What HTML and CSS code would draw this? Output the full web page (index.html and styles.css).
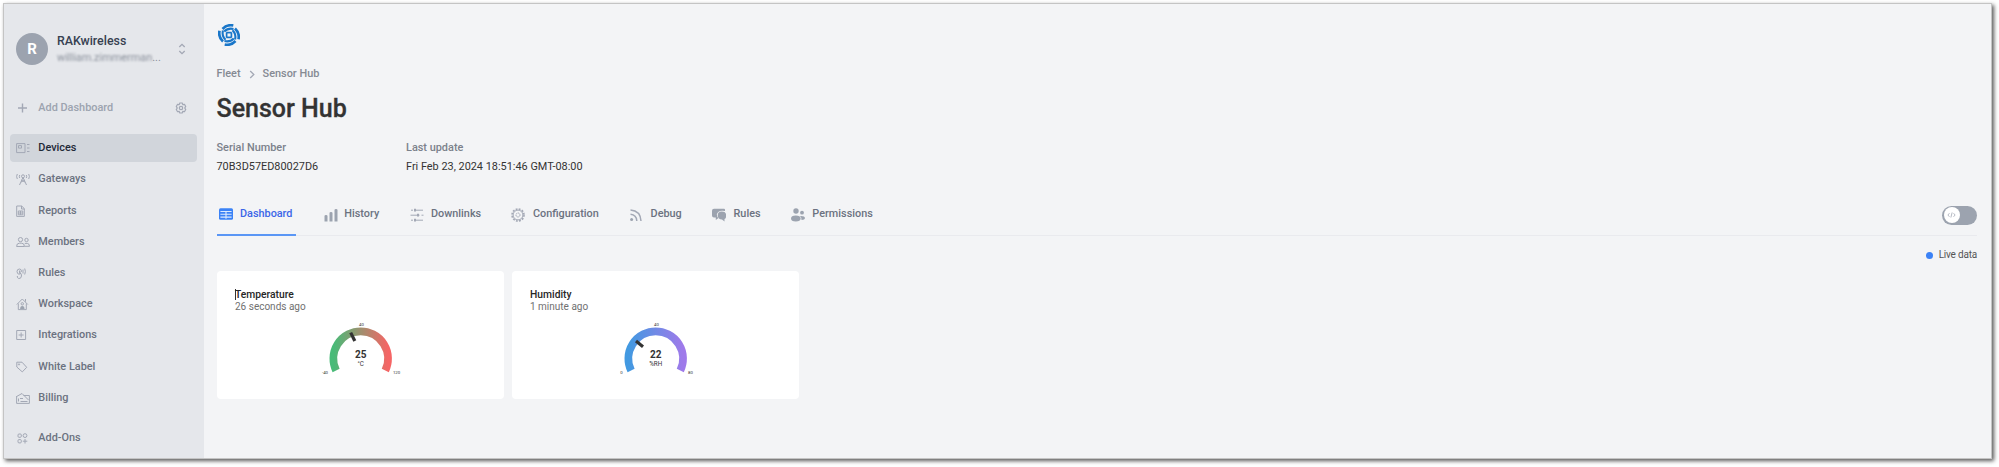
FILE: index.html
```html
<!DOCTYPE html>
<html lang="en">
<head>
<meta charset="utf-8">
<title>Sensor Hub</title>
<link rel="stylesheet" href="styles.css">
</head>
<body>
<div class="window">
  <aside class="sidebar">
    <div class="account">
      <div class="avatar">R</div>
      <div class="who"><div class="name">RAKwireless</div><div class="mail"><span class="blurred">william.zimmerman</span>...</div></div>
      <svg class="updown" viewBox="0 0 8 12"><path d="M1.3 4 4 1.3 6.7 4M1.3 8 4 10.7 6.7 8"/></svg>
    </div>
    <div class="add">
      <svg class="ico" viewBox="0 0 14 14"><path d="M2 7h9M6.5 2.5v9"/></svg>
      <span>Add Dashboard</span>
      <svg class="cog" viewBox="0 0 12 12"><path d="M4.800 1h2.400l.6 1.500 1.700-.2 1.200 2.100L9.800 6l.9 1.600-1.200 2.100-1.700-.2-.6 1.500H4.800l-.6-1.500-1.700.2-1.200-2.100L2.200 6l-.9-1.600 1.200-2.100 1.700.2z"/><circle cx="6" cy="6" r="1.700"/></svg>
    </div>
    <nav class="nav">
      <a class="item active"><svg class="ico" viewBox="0 0 14 14"><path d="M.6 2.600h8.400v9H.600zM2.500 4.600h3v2.500h-3zM11 3.500h2.500M11 7h2.500M11 10.500h2.500"/></svg>Devices</a>
      <a class="item"><svg class="ico" viewBox="0 0 14 14"><path d="M7 5.500 3.500 13M7 5.500l3.500 7.500M5 10l4-2M9 10 5 8M1.300 2q-1.400 2.500 0 5M12.700 2q1.400 2.500 0 5M3.700 3q-.8 1.500 0 3M10.300 3q.8 1.500 0 3"/><circle cx="7" cy="4.300" r="1.500"/></svg>Gateways</a>
      <a class="item"><svg class="ico" viewBox="0 0 14 14"><path d="M.7 2h5L8.300 4.600V12.400H.700zM5.500 2v3h3M2.300 7h4.500v3.800H2.300zM2.300 9h4.500M4.500 7v3.800"/></svg>Reports</a>
      <a class="item"><svg class="ico" viewBox="0 0 14 14"><circle cx="4.500" cy="4.600" r="2.100"/><circle cx="10.500" cy="5" r="1.700"/><path d="M.6 11.500q0-3.300 2.700-3.300h2.500q2.600 0 2.600 3.300zM8.800 8.400h2.500q2.200.2 2.200 2.900H8.500"/></svg>Members</a>
      <a class="item"><svg class="ico" viewBox="0 0 14 14"><path d="M3.500 8.500Q1 8 1 5.500T3.500 3Q5.500 3 5.500 5.500L3 7q3 0 2.500 3T2.700 12.500Q1 12 1.300 10M7 3.500v4M8.700 2.500q1.400 3 0 6M3.500 4.500v2"/></svg>Rules</a>
      <a class="item"><svg class="ico" viewBox="0 0 14 14"><path d="M.8 7.500 6.300 2l5.500 5.500M2.300 6.500v6.100h8V6.500M9.500 2v2.700"/><circle cx="6.300" cy="6.800" r="1.200"/><path class="solid" d="M4.100 12q0-2.900 2.200-2.900T8.500 12z"/></svg>Workspace</a>
      <a class="item"><svg class="ico" viewBox="0 0 14 14"><path d="M.7 2.500h8.900v9H.7zM5.150 4.500v5M2.600 7h5"/></svg>Integrations</a>
      <a class="item"><svg class="ico" viewBox="0 0 14 14"><path d="M.8 2.200H6l4.700 5.100-4.400 4.600L.8 7z"/><circle cx="3" cy="4.400" r=".6"/></svg>White Label</a>
      <a class="item"><svg class="ico" viewBox="0 0 14 14"><path d="M.6 5.500 6 2.500l6.500 6.500M7.500 4.500h5.900v7.900H.6V5M2.500 7.500v3M4.500 10.500h7M4 7.500h3"/></svg>Billing</a>
      <a class="item last"><svg class="ico" viewBox="0 0 14 14"><rect x="2" y="3" width="3.300" height="3.300" rx="1"/><circle cx="9" cy="4.600" r="1.900"/><rect x="2" y="8.600" width="3.300" height="3.300" rx="1"/><path d="M9 8v4.500M6.800 10.200h4.500"/></svg>Add-Ons</a>
    </nav>
  </aside>
  <main class="main">
    <svg class="logo" viewBox="0 0 22 22">
      <g id="blade"><path d="M4.500 5Q9 .2 15.300 1.500" stroke-width="2.700"/><path d="M6.200 7.500Q10 3.600 15.500 4.900" stroke-width="2.100"/><path d="M8.300 8.600h5.200" stroke-width="1.700"/></g>
      <use href="#blade" transform="rotate(90 11 11)"/><use href="#blade" transform="rotate(180 11 11)"/><use href="#blade" transform="rotate(270 11 11)"/>
    </svg>
    <div class="crumbs"><span>Fleet</span><svg viewBox="0 0 6 9"><path d="M1.200 1 4.800 4.500 1.200 8"/></svg><span>Sensor Hub</span></div>
    <h1 class="title">Sensor Hub</h1>
    <dl class="meta">
      <div><dt>Serial Number</dt><dd>70B3D57ED80027D6</dd></div>
      <div><dt>Last update</dt><dd>Fri Feb 23, 2024 18:51:46 GMT-08:00</dd></div>
    </dl>
    <div class="tabs">
      <a class="tab on"><svg viewBox="0 0 14 14"><rect class="solid" y="1.200" width="14" height="11.600" rx="1.500"/><path class="cut" d="M1.400 4.500h11.200M1.400 7.300h11.200M1.400 10.100h11.200M7 4v7.800"/></svg>Dashboard</a>
      <a class="tab history"><svg viewBox="0 0 14 14"><path class="solid" d="M.5 8q0-1 1.500-1t1.500 1v5.500h-3zM5.500 5q0-1 1.500-1t1.500 1v8.500h-3zM10.500 2q0-1 1.500-1t1.500 1v11.500h-3z"/></svg>History</a>
      <a class="tab downlinks"><svg viewBox="0 0 14 14"><path d="M1 2.200h2M4.500 2.200h8.500M.5 7.200h9M11.500 7.200h2M1 12.200h2M4.500 12.200H13" /><path d="M5 .8v2.800M8 5.800v2.800M5 10.800v2.800" stroke-width="2"/></svg>Downlinks</a>
      <a class="tab config"><svg viewBox="0 0 14 14"><circle cx="7" cy="7" r="6" stroke-width="1.600" stroke-dasharray="1.900 1.240"/><circle cx="7" cy="7" r="4.900"/><circle cx="7" cy="7" r="2" stroke-dasharray="1.500 .6"/></svg>Configuration</a>
      <a class="tab debug"><svg viewBox="0 0 14 14"><circle class="solid" cx="2.600" cy="11.600" r="1.500"/><path d="M1.500 6.300q6 .5 6.300 6.700M1.500 2q10 .8 10.500 11" stroke-width="1.500"/></svg>Debug</a>
      <a class="tab rules"><svg viewBox="0 0 14 14"><path class="solid" d="M2 .8h10q1 0 1 1V3Q6 1.500 4.800 6.500 5 9 6.500 10L3.800 12V9.500H2Q0 9.500 0 7.500V2.800q0-2 2-2z"/><path class="solid" d="M9.700 3.500q4.500 0 4.500 4 0 2.800-1.700 3.500v2.500l-2.500-2q-4-.2-4.300-4 0-4 4-4z"/></svg>Rules</a>
      <a class="tab perms"><svg viewBox="0 0 14 14"><circle class="solid" cx="5" cy="3" r="2.700"/><ellipse class="solid" cx="4.800" cy="10.500" rx="4.800" ry="3"/><circle class="solid" cx="11" cy="4.700" r="1.900"/><path class="solid" d="M9 8q4.900-.3 5 2.300-.3 1.700-3.500 1.600Q10.800 9.500 9 8z"/></svg>Permissions</a>
      <div class="toggle"><span class="knob"><svg viewBox="0 0 10 8"><path d="M2.700 2 1 4l1.700 2M7.300 2 9 4 7.300 6M5.700 1.200 4.300 6.800"/></svg></span></div>
    </div>
    <div class="live"><i></i>Live data</div>
    <section class="cards">
      <article class="card">
        <h2 class="editing">Temperature</h2><p>26 seconds ago</p>
        <svg class="gauge" viewBox="0 0 84 60">
          <defs><linearGradient id="heat"><stop offset="0" stop-color="#48bb78"/><stop offset="1" stop-color="#f56565"/></linearGradient></defs>
          <path class="arc" stroke="url(#heat)" d="M16.100 52.500A27.300 27.300 0 1 1 65.300 52.500"/>
          <path class="needle" d="M30.700 14.600 34.800 23"/>
          <text x="40.700" y="47.800" class="unit">°C</text><text x="40.700" y="40.400" class="value">25</text>
          <text x="41.500" y="8.300">40</text><text x="5" y="55.500">-40</text><text x="76.500" y="55.500">120</text>
        </svg>
      </article>
      <article class="card">
        <h2>Humidity</h2><p>1 minute ago</p>
        <svg class="gauge" viewBox="0 0 84 60">
          <defs><linearGradient id="wet"><stop offset="0" stop-color="#4299e1"/><stop offset="1" stop-color="#9f7aea"/></linearGradient></defs>
          <path class="arc" stroke="url(#wet)" d="M16.100 52.500A27.300 27.300 0 1 1 65.300 52.500"/>
          <path class="needle" d="M21 23 28 28.700"/>
          <text x="40.700" y="47.800" class="unit">%RH</text><text x="40.700" y="40.400" class="value">22</text>
          <text x="41.500" y="8.300">40</text><text x="6.500" y="55.500">0</text><text x="75.500" y="55.500">80</text>
        </svg>
      </article>
    </section>
  </main>
</div>
</body>
</html>
```
FILE: styles.css
```css
* { box-sizing: border-box; }
body { margin: 0; height: 467px; overflow: hidden; background: #fff; font: 500 10.900px/14px Roboto, sans-serif; color: #6b7280; }
svg { fill: none; stroke: #a3a8b5; stroke-width: 1; flex: none; display: block; }
.solid { fill: #9ca3af; stroke: none; }
.window { display: flex; width: 1989px; height: 456px; margin: 3px 0 0 3px; border: 1px solid #c4c4c4; background: #f3f4f6; box-shadow: 2px 2px 4px rgba(0,0,0,.65); }
.sidebar { width: 200px; background: #e5e7eb; flex: none; }
.account { display: flex; align-items: center; padding: 29px 17px 0 12px; height: 61px; }
.avatar { width: 32px; height: 32px; border-radius: 50%; background: #9ca3af; color: #fff; font: 700 15px/33px Roboto, sans-serif; text-align: center; }
.who { width: 121px; margin-left: 9px; }
.name { font-size: 12.400px; line-height: 16px; color: #374151; }
.mail { font-size: 10.900px; line-height: 17px; color: #8a909b; font-weight: 400; }
.blurred { filter: blur(1.300px); }
.updown { width: 8px; height: 12px; stroke-width: 1.300; }
.add { display: flex; align-items: center; height: 28px; margin-top: 28.500px; padding: 0 17px 0 12px; color: #9ca3af; }
.ico { width: 14px; height: 14px; margin-right: 8.300px; }
.add .ico { stroke-width: 1.400; }
.cog { width: 12px; height: 12px; margin-left: auto; stroke-width: 1.200; }
.nav { padding: 12.700px 7px 0 6px; }
.item { display: flex; align-items: center; height: 28px; margin-bottom: 3.200px; padding-left: 6px; border-radius: 4px; }
.item.active { background: #d1d5db; color: #1f2937; }
.item.last { margin-top: 12.500px; }
.main { flex: 1; padding: 20px 14px 0 12.500px; }
.logo { width: 22px; height: 22px; margin-left: 1px; stroke: #1976c9; }
.crumbs { display: flex; align-items: center; height: 14px; margin-top: 21px; color: #858a93; }
.crumbs svg { width: 6px; height: 9px; margin: 1px 8px 0; stroke-width: 1.300; }
.title { margin: 10.500px 0 0; font: 500 25px/34px Roboto, sans-serif; color: #333; -webkit-text-stroke: .3px #333; }
.meta { display: flex; margin: 15.500px 0 0; }
.meta div { width: 189.500px; white-space: nowrap; }
.meta dt { line-height: 14px; color: #7b818b; }
.meta dd { margin: 5px 0 0; line-height: 14px; font-weight: 400; color: #333; }
.tabs { display: flex; height: 43px; margin-top: 19px; border-bottom: 1px solid #e9eaee; }
.tab { display: flex; align-items: center; height: 42px; font-size: 10.850px; }
.tab svg { width: 14px; height: 14px; margin: 1px 7.500px 0 2px; }
.tab.on { width: 79.500px; height: 43px; color: #3b66e8; border-bottom: 2px solid #5a96f5; }
.on .solid { fill: #3b82f6; }
.on .cut { stroke: #dceafe; stroke-width: 1.100; }
.history { margin-left: 26px; }
.history svg { margin-right: 6.300px; }
.downlinks { margin-left: 28.300px; }
.config { margin-left: 28.300px; }
.debug { margin-left: 28.300px; }
.rules { margin-left: 28.300px; }
.perms { margin-left: 28.300px; }
.toggle { width: 35px; height: 19px; margin: 12.500px 0 0 auto; border-radius: 10px; background: #9ca3af; padding: 1.500px; }
.knob { display: grid; place-items: center; width: 16px; height: 16px; border-radius: 50%; background: #fff; }
.knob svg { width: 9px; height: 8px; stroke-width: .9; }
.live { display: flex; align-items: center; justify-content: flex-end; height: 14px; margin-top: 12px; font-weight: 400; font-size: 10px; letter-spacing: -.2px; color: #555; }
.live i { width: 7px; height: 7px; border-radius: 50%; background: #3b82f6; margin-right: 6px; }
.cards { display: flex; gap: 7.500px; margin-top: 8.500px; }
.card { width: 287.500px; height: 128px; border-radius: 4px; background: #fff; padding: 18px 18.500px; }
.card h2 { margin: 0; font: 500 10.300px/12px Roboto, sans-serif; color: #262626; }
.editing::before { content: ""; float: left; width: 1px; height: 11px; margin: 0 -1px 0 0; background: #333; }
.card p { margin: 0; font: 400 10px/11px Roboto, sans-serif; color: #707070; }
.gauge { width: 84px; height: 60px; margin: 6px 0 0 85px; }
.arc { stroke-width: 7.800; }
.needle { stroke: #333; stroke-width: 3.200; }
.gauge text { font: 400 4.300px Roboto, sans-serif; fill: #333; stroke: none; text-anchor: middle; }
.gauge text.value { font-size: 10px; font-weight: 700; }
.gauge text.unit { font-size: 6.300px; }
```
